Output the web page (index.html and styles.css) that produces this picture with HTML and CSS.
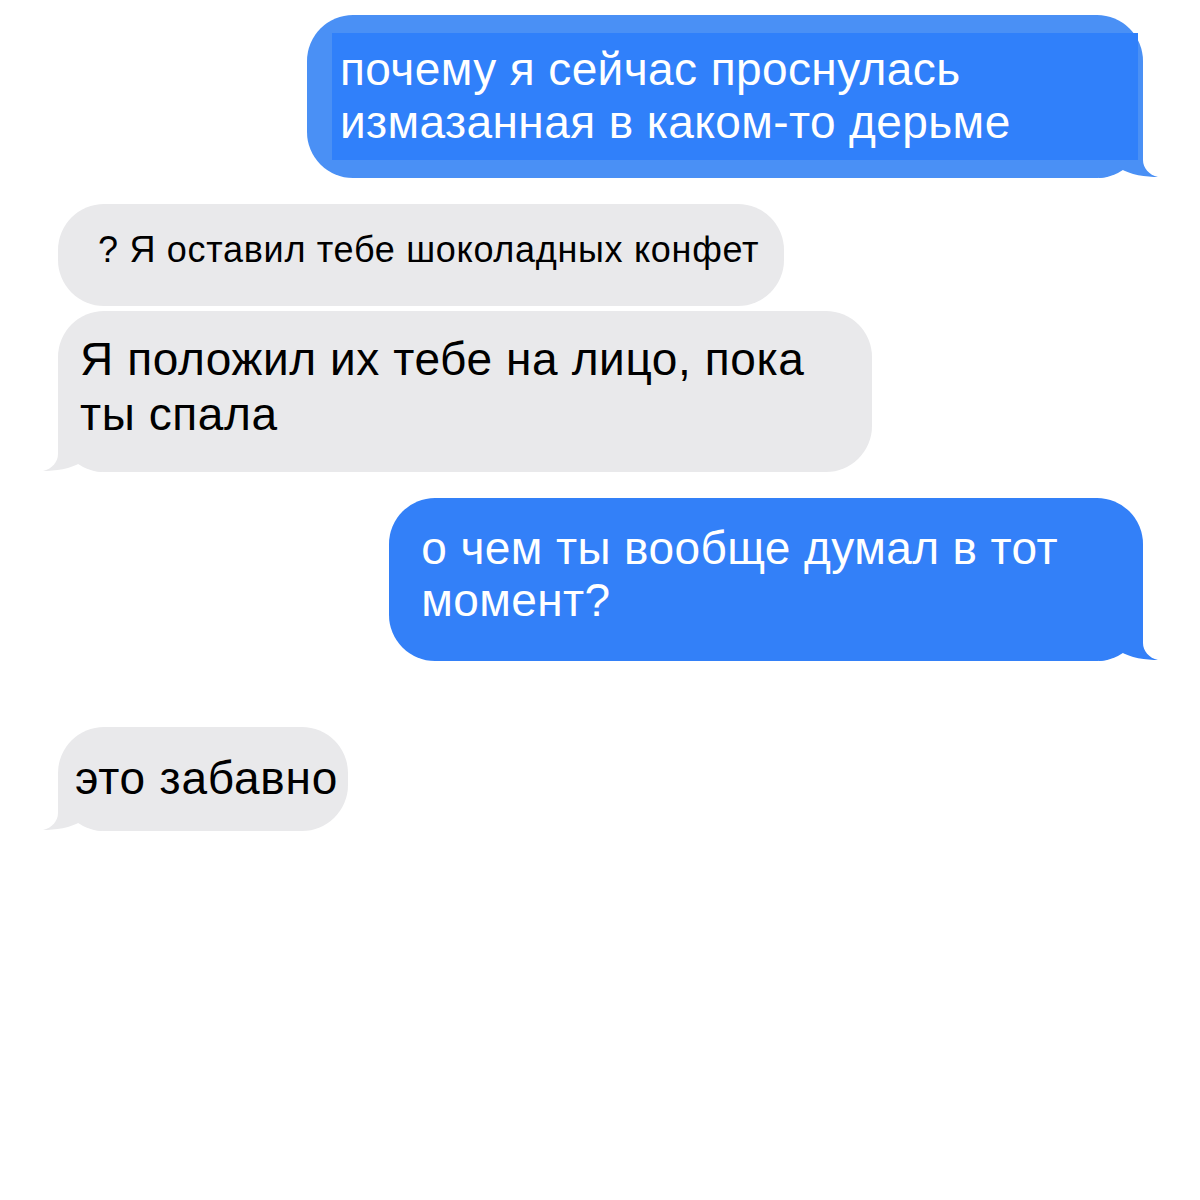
FILE: index.html
```html
<!DOCTYPE html>
<html lang="ru">

<head>
  <meta charset="UTF-8">
  <meta name="viewport" content="width=device-width, initial-scale=1">
  <title>Сообщения</title>
  <link rel="stylesheet" href="styles.css">
</head>

<body>

  <div class="chat">

    <div class="bubble out first">
      <div class="patch">почему я сейчас проснулась<br>измазанная в каком-то дерьме</div>
      <svg class="tail" viewBox="0 0 60 50" width="60" height="50"><path d="M0 0H44V32C44 40 50 47 59 49C48 49 30 47 21 40C15 46 8 50 0 50Z" /></svg>
    </div>

    <div class="bubble in small">? Я оставил тебе шоколадных конфет</div>

    <div class="bubble in big">
      Я положил их тебе на лицо, пока<br>ты спала
      <svg class="tail" viewBox="0 0 60 50" width="60" height="50"><path d="M0 0H44V32C44 40 50 47 59 49C48 49 30 47 21 40C15 46 8 50 0 50Z" /></svg>
    </div>

    <div class="bubble out second">
      о чем ты вообще думал в тот<br>момент?
      <svg class="tail" viewBox="0 0 60 50" width="60" height="50"><path d="M0 0H44V32C44 40 50 47 59 49C48 49 30 47 21 40C15 46 8 50 0 50Z" /></svg>
    </div>

    <div class="bubble in last">
      это забавно
      <svg class="tail" viewBox="0 0 60 50" width="60" height="50"><path d="M0 0H44V32C44 40 50 47 59 49C48 49 30 47 21 40C15 46 8 50 0 50Z" /></svg>
    </div>

  </div>

</body>

</html>
```

FILE: styles.css
```css
* {
  box-sizing: border-box;
  margin: 0;
  padding: 0;
}

body {
  font-family: "Liberation Sans", Arial, sans-serif;
  background: #fff;
  color: #000;
}

.chat {
  display: flex;
  flex-direction: column;
  align-items: flex-start;
  padding: 15px 57px 0 58px;
}

.bubble {
  position: relative;
  z-index: 0;
  border-radius: 46px;
  font-size: 46px;
  line-height: 55px;
  letter-spacing: 0.5px;
  white-space: nowrap;
}

/* tail sits behind the text but over the bubble corner */
.bubble .tail {
  position: absolute;
  z-index: -1;
  bottom: 0;
  right: -16px;
}

.bubble.in {
  background: #e9e9eb;
  color: #000;
}

.bubble.in .tail {
  right: auto;
  left: -16px;
  transform: scaleX(-1);
  fill: #e9e9eb;
}

.bubble.out {
  align-self: flex-end;
  color: #fff;
}

/* first message: lighter bubble with a pasted darker block */
.bubble.first {
  background: #4a90f5;
  padding: 18px 5px 18px 25px;
  line-height: 53px;
  letter-spacing: 0.4px;
}

.bubble.first .tail {
  fill: #4a90f5;
}

.patch {
  width: 806px;
  background: #3080fa;
  padding: 10px 8px 11px;
}

.bubble.small {
  margin-top: 26px;
  padding: 26px 25px 36px 40px;
  font-size: 36px;
  line-height: 40px;
  letter-spacing: 0.7px;
}

.bubble.big {
  margin-top: 5px;
  padding: 21px 68px 30px 22px;
  letter-spacing: 0.6px;
}

.bubble.second {
  margin-top: 26px;
  background: #3380f8;
  padding: 24px 85px 35px 32px;
  line-height: 52px;
  letter-spacing: 0.4px;
}

.bubble.second .tail {
  fill: #3380f8;
}

.bubble.last {
  margin-top: 66px;
  padding: 25px 10px 27px 17px;
  line-height: 52px;
  letter-spacing: 0.8px;
}
```
